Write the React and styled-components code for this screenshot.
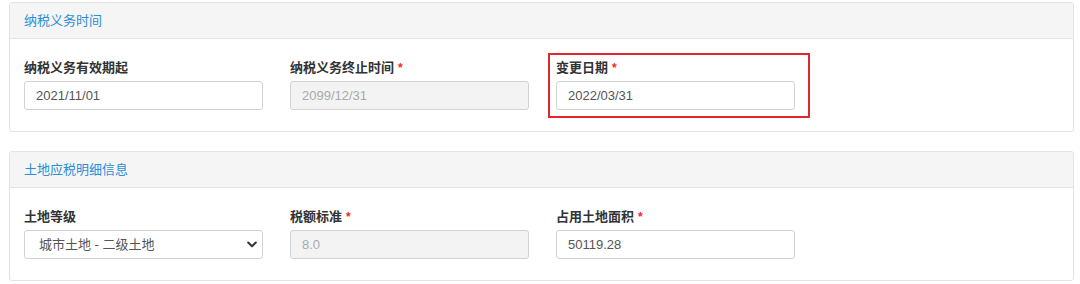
import React from 'react';
import styled, { createGlobalStyle } from 'styled-components';

const GlobalStyle = createGlobalStyle`
  body {
    margin: 0;
    background: #fff;
    font-family: "Liberation Sans", "Noto Sans CJK SC", sans-serif;
    font-size: 13px;
    color: #333;
  }
`;

const SECTIONS = [
  {
    title: '纳税义务时间',
    fields: [
      { label: '纳税义务有效期起', value: '2021/11/01' },
      { label: '纳税义务终止时间', value: '2099/12/31', required: true, disabled: true },
      { label: '变更日期', value: '2022/03/31', required: true, marked: true }
    ]
  },
  {
    title: '土地应税明细信息',
    fields: [
      { label: '土地等级', value: '城市土地 - 二级土地', select: true },
      { label: '税额标准', value: '8.0', required: true, disabled: true },
      { label: '占用土地面积', value: '50119.28', required: true }
    ]
  }
];

const Chevron = () => (
  <ChevronIcon width="10" height="7" viewBox="0 0 10 7">
    <path d="M1.2 1.5 L5 5.2 L8.8 1.5" fill="none" stroke="#333" strokeWidth="2" strokeLinecap="round" strokeLinejoin="round" />
  </ChevronIcon>
);

const Field = ({ field }) => (
  <FieldBox>
    <Label>
      {field.label}
      {field.required && <Star>*</Star>}
    </Label>
    {field.select ? (
      <SelectWrap>
        <Select defaultValue={field.value}>
          <option>{field.value}</option>
        </Select>
        <Chevron />
      </SelectWrap>
    ) : (
      <Input defaultValue={field.value} disabled={field.disabled} />
    )}
    {field.marked && <Highlight />}
  </FieldBox>
);

const App = () => (
  <Page>
    <GlobalStyle />
    {SECTIONS.map(s => (
      <Panel key={s.title}>
        <PanelHeader>{s.title}</PanelHeader>
        <PanelBody>
          {s.fields.map(f => <Field key={f.label} field={f} />)}
        </PanelBody>
      </Panel>
    ))}
  </Page>
);

const Page = styled.div`
  display: flex;
  flex-direction: column;
  gap: 19px;
  padding: 2px 6px 0 9px;
`;

const Panel = styled.section`
  border: 1px solid #e3e3e3;
  border-radius: 3px;
  background: #fff;
`;

const PanelHeader = styled.div`
  height: 35px;
  line-height: 35px;
  padding-left: 14px;
  background: #f5f5f5;
  border-bottom: 1px solid #e3e3e3;
  color: #2a8fd6;
  font-size: 13px;
  border-radius: 3px 3px 0 0;
`;

const PanelBody = styled.div`
  display: grid;
  grid-template-columns: repeat(3, 239px);
  column-gap: 27px;
  padding: 20px 14px 21px 14px;
`;

const FieldBox = styled.div`
  position: relative;
`;

const Label = styled.div`
  height: 18px;
  line-height: 18px;
  margin-bottom: 4px;
  font-weight: bold;
  font-size: 13px;
  color: #333;
  white-space: nowrap;
`;

const Star = styled.span`
  color: #f22;
  margin-left: 4px;
  font-weight: bold;
  font-size: 12px;
`;

const Input = styled.input`
  box-sizing: border-box;
  display: block;
  width: 239px;
  height: 29px;
  padding: 0 11px;
  border: 1px solid #d2d2d2;
  border-radius: 3px;
  font-family: "Liberation Sans", "Noto Sans CJK SC", sans-serif;
  font-size: 13px;
  color: #555;
  background: #fff;
  outline: none;

  &:disabled {
    background: #f3f3f3;
    color: #aaa;
  }
`;

const SelectWrap = styled.div`
  position: relative;
  width: 239px;
`;

const Select = styled.select`
  box-sizing: border-box;
  display: block;
  width: 239px;
  height: 29px;
  padding: 0 14px;
  border: 1px solid #d2d2d2;
  border-radius: 3px;
  font-family: "Liberation Sans", "Noto Sans CJK SC", sans-serif;
  font-size: 13px;
  color: #555;
  background: #fff;
  appearance: none;
  outline: none;
`;

const ChevronIcon = styled.svg`
  position: absolute;
  right: 6px;
  top: 11px;
  pointer-events: none;
`;

const Highlight = styled.div`
  position: absolute;
  left: -8px;
  top: -6px;
  right: -15px;
  bottom: -8px;
  border: 2px solid #e0262e;
  pointer-events: none;
`;

export default App;
